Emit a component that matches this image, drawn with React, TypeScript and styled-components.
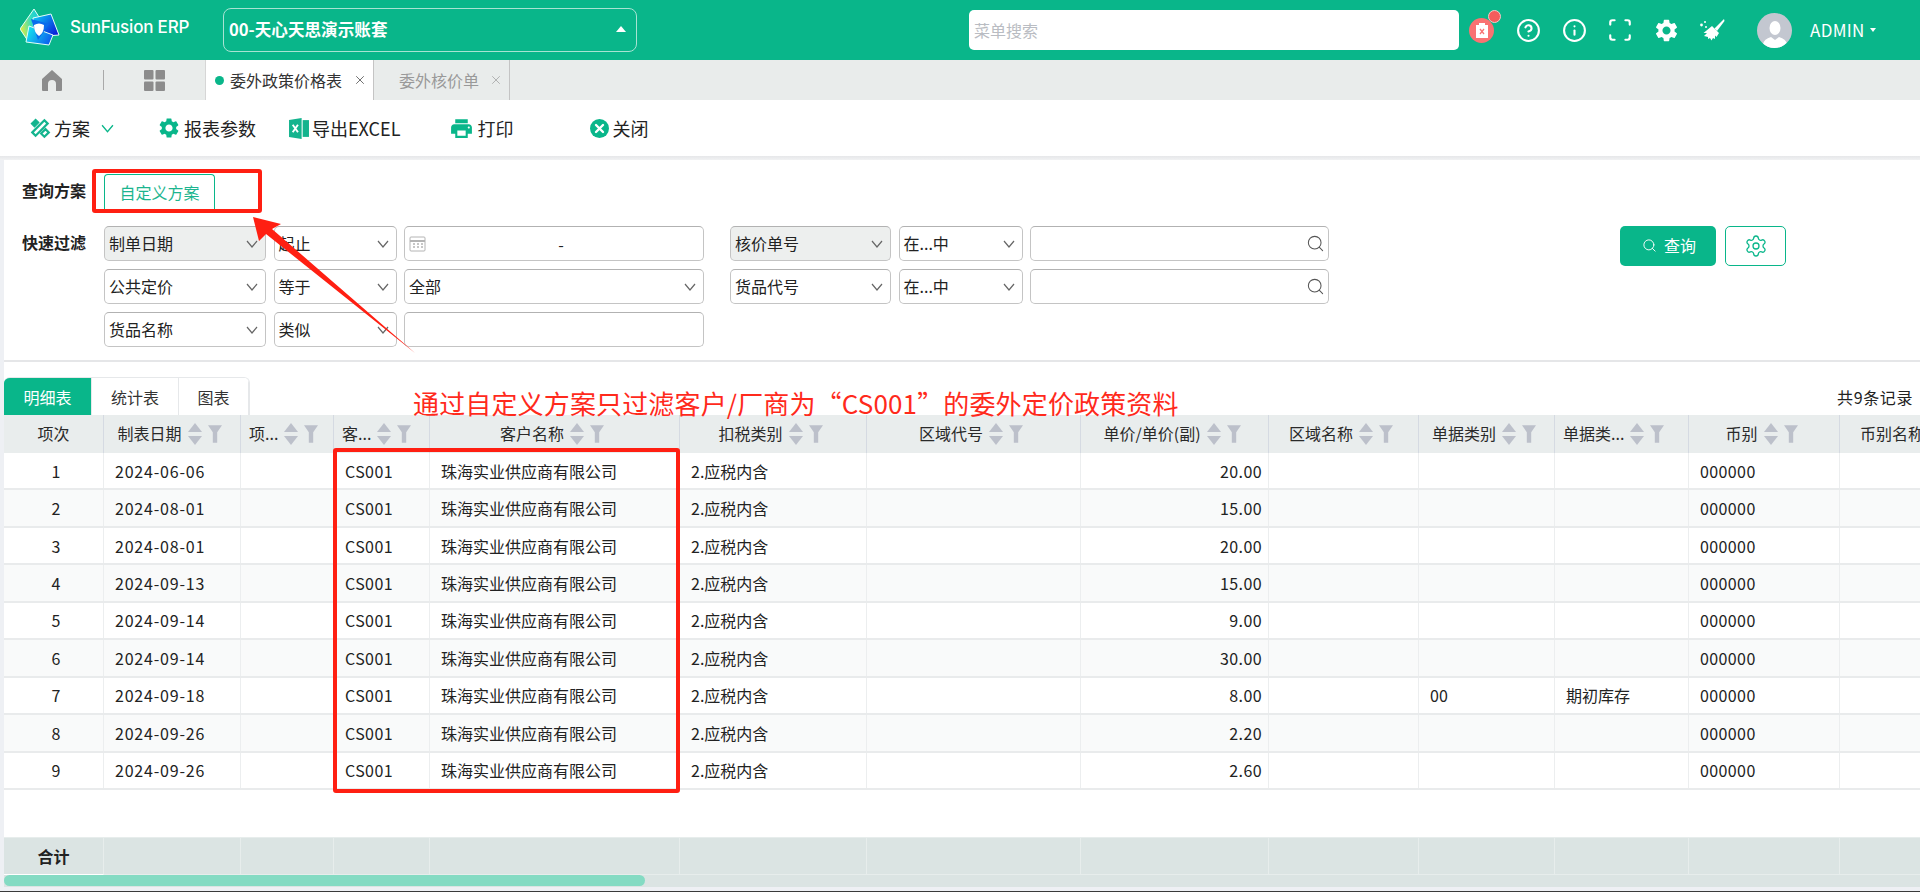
import React from 'react'
import styled, { createGlobalStyle } from 'styled-components'
import { CircleHelp, Info, Scan, Search, Settings, X } from 'lucide-react'
import { MdSettings, MdPrint } from 'react-icons/md'

const GREEN = '#09b68a'
const CJK = `"Noto Sans CJK SC", "Noto Sans", sans-serif`

const GlobalStyle = createGlobalStyle`
html, body {
  margin: 0;
  padding: 0;
  overflow: hidden;
  background: #eef0f4;
  font-family: ${CJK};
  font-size: 16px;
  color: #1f1f1f;
}
* { box-sizing: border-box; }
`

const Page = styled.div`
position: relative;
width: 1920px;
height: 892px;
display: flex;
flex-direction: column;
overflow: hidden;
background: #eef0f4;
border-bottom: 1px solid #3a3a3a;
`

/* top bar */
const TopBar = styled.header`
height: 60px;
flex: none;
display: flex;
align-items: center;
background: ${GREEN};
color: #fff;
padding-left: 20px;
`
const Brand = styled.div`
width: 203px;
display: flex;
align-items: center;
gap: 10px;
font-family: Inter, sans-serif;
font-size: 17px;
font-weight: 500;
letter-spacing: -0.2px;
padding-bottom: 6px;
`
const AccountSelect = styled.div`
width: 414px;
height: 44px;
display: flex;
align-items: center;
justify-content: space-between;
border: 1px solid #a8e3d3;
border-radius: 8px;
padding: 0 10px 2px 5px;
font-weight: 700;
font-size: 16.6px;
`
const CaretUp = styled.span`
width: 0;
height: 0;
border-left: 5px solid transparent;
border-right: 5px solid transparent;
border-bottom: 6px solid #fff;
`
const SearchBox = styled.div`
width: 490px;
height: 40px;
margin-left: 332px;
background: #fff;
border-radius: 5px;
color: #b9bcc2;
font-size: 16px;
line-height: 40px;
padding-left: 5px;
`
const AlertBadge = styled.span`
position: relative;
width: 25px;
height: 25px;
margin-left: 10px;
border-radius: 50%;
background: #f97272;
display: flex;
align-items: center;
justify-content: center;
`
const AlertDot = styled.span`
position: absolute;
top: -8px;
right: -7px;
width: 13px;
height: 13px;
border-radius: 50%;
background: #f45c5c;
border: 1px solid #f5c9c9;
`
const TopIcon = styled.span`
width: 46px;
height: 30px;
display: flex;
align-items: center;
justify-content: center;
color: #fff;
`
const TopIcons = styled.div`
display: flex;
align-items: center;
margin-left: 11px;
`
const Avatar = styled.span`
width: 35px;
height: 35px;
margin-left: 22px;
border-radius: 50%;
background: #c3c7d0;
display: flex;
align-items: flex-end;
justify-content: center;
overflow: hidden;
`
const UserName = styled.span`
margin: 0 0 2px 18px;
font-size: 17px;
letter-spacing: 0.3px;
`
const CaretDown = styled.span`
width: 0;
height: 0;
margin-left: 5px;
border-left: 3px solid transparent;
border-right: 3px solid transparent;
border-top: 4px solid #fff;
`

/* open page tabs */
const TabBar = styled.nav`
height: 40px;
flex: none;
display: flex;
background: #e9eceb;
`
const NavIcon = styled.span<{ $w: number; $divider?: boolean }>`
width: ${(p) => p.$w}px;
height: 20px;
align-self: center;
display: flex;
align-items: center;
justify-content: center;
border-right: ${(p) => (p.$divider ? '1px solid #a9a9a9' : 'none')};
`
const PageTab = styled.div<{ $active?: boolean; $w: number }>`
width: ${(p) => p.$w}px;
display: flex;
align-items: center;
padding-left: ${(p) => (p.$active ? 9 : 25)}px;
background: ${(p) => (p.$active ? '#fff' : 'transparent')};
color: ${(p) => (p.$active ? '#333' : '#999')};
border-left: ${(p) => (p.$active ? '1px solid #d6d6d6' : 'none')};
border-right: 1px solid #c4c4c4;
font-size: 16px;
`
const TabDot = styled.span`
width: 9px;
height: 9px;
border-radius: 50%;
background: ${GREEN};
margin-right: 6px;
`
const TabClose = styled.span`
display: flex;
margin-left: auto;
margin-right: 6px;
color: inherit;
`

/* action toolbar */
const ToolBar = styled.div`
height: 56px;
flex: none;
display: flex;
align-items: center;
background: #fff;
font-size: 18px;
color: #222;
`
const ToolItem = styled.span<{ $left: number }>`
display: flex;
align-items: center;
gap: 3px;
margin-left: ${(p) => p.$left}px;
white-space: nowrap;
`
const MenuChevron = styled.span`
display: flex;
margin-left: 8px;
`
const Band = styled.div`
height: 4px;
flex: none;
background: linear-gradient(#e6e7e9, #f1f2f3);
`

/* query panel */
const Body = styled.main`
flex: 1;
min-height: 0;
margin-left: 4px;
background: #fff;
display: flex;
flex-direction: column;
`
const QueryPanel = styled.section`
height: 200px;
flex: none;
padding: 14px 0 0 18px;
`
const SchemeRow = styled.div`
display: flex;
height: 35px;
align-items: center;
`
const RowLabel = styled.span`
width: 82px;
height: 35px;
line-height: 33px;
font-weight: 700;
font-size: 16px;
color: #222;
flex: none;
`
const SchemeTab = styled.span`
width: 111px;
height: 35px;
display: flex;
align-items: center;
justify-content: center;
color: #1cb58f;
font-size: 16px;
border: 1px solid ${GREEN};
border-bottom: none;
border-radius: 4px 4px 0 0;
`
const FilterRow = styled.div`
display: flex;
margin-top: 17px;
`
const FilterGrid = styled.div`
display: grid;
grid-template-columns: 162px 123px 300px 11px 161px 124px 299px;
grid-auto-rows: 35px;
gap: 8px 7.5px;
`
const Field = styled.div<{ $shaded?: boolean; $right?: boolean }>`
display: flex;
align-items: center;
justify-content: space-between;
height: 35px;
padding: 0 7px 0 4px;
background: ${(p) => (p.$shaded ? '#edefee' : '#fff')};
border: 1px solid #c4c4c4;
border-top-color: #b2b2b2;
border-radius: 5px;
font-size: 16px;
color: #222;
white-space: nowrap;
`
const FieldText = styled.span`
margin-top: -2px;
`
const DateText = styled.span`
flex: 1;
text-align: center;
`
const SearchInput = styled(Field)`
padding-right: 3px;
`
const Spacer = styled.span``
const QueryActions = styled.div`
display: flex;
gap: 9px;
margin-left: 291px;
align-items: flex-start;
`
const QueryButton = styled.button`
width: 96px;
height: 40px;
border: none;
border-radius: 5px;
padding: 0 0 2px 2px;
background: ${GREEN};
color: #fff;
font: inherit;
font-size: 16px;
display: flex;
align-items: center;
justify-content: center;
gap: 7px;
`
const GearButton = styled.button`
width: 61px;
height: 40px;
background: #fff;
border: 1px solid ${GREEN};
border-radius: 5px;
color: ${GREEN};
display: flex;
align-items: center;
justify-content: center;
`
const Rule = styled.div`
height: 2px;
flex: none;
background: #e5e6e8;
`

/* list */
const ListBar = styled.div`
height: 53px;
flex: none;
padding-top: 15px;
display: flex;
align-items: flex-end;
justify-content: space-between;
`
const ViewTabs = styled.div`
display: flex;
height: 38px;
border: 1px solid #e6e8ea;
border-left: none;
border-bottom: none;
border-radius: 6px 6px 0 0;
overflow: hidden;
`
const ViewTab = styled.span<{ $active?: boolean; $w: number }>`
width: ${(p) => p.$w}px;
display: flex;
align-items: center;
justify-content: center;
font-size: 16px;
background: ${(p) => (p.$active ? GREEN : '#fff')};
color: ${(p) => (p.$active ? '#fff' : '#333')};
border-right: 1px solid #e6e8ea;
`
const RecordCount = styled.span`
font-size: 16px;
letter-spacing: 0.6px;
color: #222;
padding: 0 7px 6px 0;
`
const COLUMNS = '100px 137px 93px 96px 250px 187px 214px 188px 150px 136px 134px 151px 150px'
const TableWrap = styled.div`
flex: 1;
min-height: 0;
overflow: hidden;
display: flex;
flex-direction: column;
`
const HeadRow = styled.div`
display: grid;
grid-template-columns: ${COLUMNS};
height: 38px;
flex: none;
background: #e9eded;
`
const HeadCell = styled.div<{ $left?: boolean; $plain?: boolean }>`
display: flex;
align-items: center;
justify-content: ${(p) => (p.$left ? 'flex-start' : 'center')};
padding-left: ${(p) => (p.$left ? 8 : 0)}px;
padding-right: ${(p) => (p.$left || p.$plain ? 0 : 5)}px;
gap: 6px;
border-right: 1px solid #d5dae2;
font-size: 16px;
color: #2a2a2a;
white-space: nowrap;
overflow: hidden;
`
const HeadLabel = styled.span`
margin-top: -2px;
`
const Row = styled.div<{ $even: boolean }>`
display: grid;
grid-template-columns: ${COLUMNS};
height: 37.44px;
flex: none;
background: ${(p) => (p.$even ? '#f9fafa' : '#fff')};
border-bottom: 2px solid #e9ebec;
`
const Cell = styled.div<{ $align?: string; $track?: number }>`
display: flex;
align-items: center;
padding: 0 6px 0 11px;
justify-content: ${(p) => p.$align || 'flex-start'};
letter-spacing: ${(p) => p.$track || 0}px;
border-right: 1px solid #eceeef;
font-size: 16px;
color: #222;
white-space: nowrap;
overflow: hidden;
`
const Blank = styled.div`
flex: 1;
background: #fff;
`
const SumRow = styled.div`
display: grid;
grid-template-columns: ${COLUMNS};
height: 38px;
flex: none;
background: #dbe4e3;
`
const SumCell = styled.div<{ $first?: boolean }>`
display: flex;
align-items: center;
justify-content: center;
font-weight: 700;
font-size: 16px;
color: #222;
border-right: 1px solid #e7edec;
border-top: 1px solid #e7edec;
border-bottom: ${(p) => (p.$first ? '1px solid #fff' : '1px solid #e7edec')};
`
const Track = styled.div`
height: 12px;
flex: none;
background: #dbe4e3;
`
const Thumb = styled.div`
width: 641px;
height: 11px;
border-radius: 6px;
background: #84dbc3;
`
const BottomGap = styled.div`
height: 4px;
flex: none;
background: #eef0f4;
`

/* the red notes drawn over the screenshot */
const NoteBox = styled.div<{ $x: number; $y: number; $w: number; $h: number }>`
position: absolute;
left: ${(p) => p.$x}px;
top: ${(p) => p.$y}px;
width: ${(p) => p.$w}px;
height: ${(p) => p.$h}px;
border: 4px solid #ff1f12;
border-radius: 3px;
pointer-events: none;
`
const NoteText = styled.div`
position: absolute;
left: 413px;
top: 384px;
font-size: 26px;
letter-spacing: 0.15px;
line-height: 38px;
color: #ff2a1c;
white-space: nowrap;
`
const NoteArrow = styled.svg`
position: absolute;
left: 240px;
top: 205px;
`

const Logo = () => (
  <svg width="40" height="38" viewBox="0 0 40 38">
    <defs>
      <linearGradient id="lgA" x1="0" y1="0.6" x2="1" y2="0.4">
        <stop offset="0" stopColor="#e8ec3a" />
        <stop offset="0.45" stopColor="#30dcc0" />
        <stop offset="1" stopColor="#08b8f4" />
      </linearGradient>
      <linearGradient id="lgB" x1="0" y1="0" x2="1" y2="0.8">
        <stop offset="0" stopColor="#0ad4fa" />
        <stop offset="1" stopColor="#0a18d8" />
      </linearGradient>
      <linearGradient id="lgC" x1="0" y1="0.3" x2="1" y2="0.7">
        <stop offset="0" stopColor="#14e6ee" />
        <stop offset="1" stopColor="#0c58ee" />
      </linearGradient>
    </defs>
    <path d="M14 1 L27 22 L8 33 L0 21 Z" fill="url(#lgA)" stroke="#e4fff8" strokeWidth="1" strokeLinejoin="round" />
    <path d="M31 6 L39 27 L14 29 L13 10 Z" fill="url(#lgB)" stroke="#e4fff8" strokeWidth="1" strokeLinejoin="round" />
    <path d="M9 18 L33 27 L29 37 L6 34 Z" fill="url(#lgC)" stroke="#e4fff8" strokeWidth="1" strokeLinejoin="round" />
    <path d="M11 11 L29 16 L18 32 Z" fill="#0a6cec" />
    <path d="M14 17 Q19 14 24 17 Q24 25 19 28 Q14 25 14 17 Z" fill="#fff" />
  </svg>
)

const TaskIcon = () => (
  <svg width="14" height="17" viewBox="0 0 14 17">
    <path d="M1 3 H4 V1 H10 V3 H13 V16 H1 Z" fill="#fff" />
    <path d="M5 7 L9 12 M9 7 L5 12" stroke="#f97272" strokeWidth="1.3" />
  </svg>
)

const BroomIcon = () => (
  <svg width="26" height="24" viewBox="0 0 26 24" fill="#fff">
    <path d="M25 1 L15.5 10.5 L18 13 L25.5 3 Z" />
    <path d="M13 8 L20 15 L17.5 19 L16 17.5 L16 21 L14 20 L12.5 22.5 L11 20 L9 21 L9 19 L5 18 L8 15 L4.5 15 Z" />
    <circle cx="2.5" cy="7" r="1.4" />
    <circle cx="6" cy="4" r="1" />
    <circle cx="7" cy="9" r="1" />
  </svg>
)

const AvatarFigure = () => (
  <svg width="24" height="28" viewBox="0 0 24 28" fill="#fff">
    <ellipse cx="12" cy="8" rx="5.5" ry="7" />
    <path d="M0 28 V24 Q1 19 8 17 L12 20 L16 17 Q23 19 24 24 V28 Z" />
  </svg>
)

const HomeIcon = () => (
  <svg width="20" height="21" viewBox="0 0 20 21" fill="#8c8c8c">
    <path d="M10 0 L20 9 V20 Q20 21 19 21 H14 V14 Q14 10 10 10 Q6 10 6 14 V21 H1 Q0 21 0 20 V9 Z" />
  </svg>
)

const GridIcon = () => (
  <svg width="21" height="21" viewBox="0 0 21 21" fill="#8c8c8c">
    <rect width="9.5" height="9.5" rx="1" />
    <rect x="11.5" width="9.5" height="9.5" rx="1" />
    <rect y="11.5" width="9.5" height="9.5" rx="1" />
    <rect x="11.5" y="11.5" width="9.5" height="9.5" rx="1" />
  </svg>
)

const PlanIcon = () => (
  <svg width="22" height="22" viewBox="0 0 20 20" fill="none" stroke="#14b48e" strokeWidth="2">
    <path d="M3 14 L14 3 L17 6 L6 17 Z" />
    <path d="M2 6 L6 2 L9 5 L5 9 Z" fill="#14b48e" strokeWidth="1" />
    <path d="M11 15 L15 11 L18 14 L14 18 Z" />
  </svg>
)

const ExcelIcon = () => (
  <svg width="20" height="21" viewBox="0 0 19 20">
    <path d="M0 2 L12 0 V20 L0 18 Z" fill="#14b48e" />
    <rect x="13" y="2" width="6" height="16" fill="#14b48e" />
    <path d="M3.5 6.5 L8.5 13.5 M8.5 6.5 L3.5 13.5" stroke="#fff" strokeWidth="1.8" />
  </svg>
)

const CloseIcon = () => (
  <svg width="19" height="19" viewBox="0 0 19 19">
    <circle cx="9.5" cy="9.5" r="9.5" fill={GREEN} />
    <path d="M6 6 L13 13 M13 6 L6 13" stroke="#fff" strokeWidth="2.4" strokeLinecap="round" />
  </svg>
)

const Chevron = ({ color = '#666', size = 12 }: { color?: string; size?: number }) => (
  <svg width={size} height={size - 4} viewBox="0 0 12 8" fill="none" stroke={color} strokeWidth="1.2">
    <path d="M1 1 L6 7 L11 1" />
  </svg>
)

const CalendarIcon = () => (
  <svg width="17" height="17" viewBox="0 0 17 17" fill="none" stroke="#b4b4b4">
    <rect x="1" y="2" width="15" height="14" rx="1" />
    <path d="M1 6 H16" strokeWidth="2" />
    <path d="M4 9 H6 M8 9 H10 M12 9 H14 M4 12 H6 M8 12 H10 M12 12 H14" strokeWidth="1.4" />
  </svg>
)

const SortIcon = () => (
  <svg width="14" height="22" viewBox="0 0 14 22" fill="#bcc0ca">
    <path d="M7 0 L14 9 H0 Z" />
    <path d="M0 13 H14 L7 22 Z" />
  </svg>
)

const FunnelIcon = () => (
  <svg width="14" height="20" viewBox="0 0 16 20" fill="#bcc0ca">
    <path d="M0 0 H16 L10.5 8 V20 H5.5 V8 Z" />
  </svg>
)

const Select = ({ label, shaded }: { label: string; shaded?: boolean }) => (
  <Field $shaded={shaded}>
    <FieldText>{label}</FieldText>
    <Chevron />
  </Field>
)

const SearchField = () => (
  <SearchInput>
    <Spacer />
    <Search size={19} color="#555" strokeWidth={1.3} />
  </SearchInput>
)

const headers = [
  { label: '项次', plain: true },
  { label: '制表日期' },
  { label: '项...', left: true },
  { label: '客...', left: true },
  { label: '客户名称' },
  { label: '扣税类别' },
  { label: '区域代号' },
  { label: '单价/单价(副)' },
  { label: '区域名称' },
  { label: '单据类别' },
  { label: '单据类...', left: true },
  { label: '币别' },
  { label: '币别名称' },
]

const records = [
  { date: '2024-06-06', price: '20.00' },
  { date: '2024-08-01', price: '15.00' },
  { date: '2024-08-01', price: '20.00' },
  { date: '2024-09-13', price: '15.00' },
  { date: '2024-09-14', price: '9.00' },
  { date: '2024-09-14', price: '30.00' },
  { date: '2024-09-18', price: '8.00', docType: '00', docName: '期初库存' },
  { date: '2024-09-26', price: '2.20' },
  { date: '2024-09-26', price: '2.60' },
]

export default function App() {
  return (
    <Page>
      <GlobalStyle />
      <TopBar>
        <Brand>
          <Logo />
          SunFusion ERP
        </Brand>
        <AccountSelect>
          00-天心天思演示账套
          <CaretUp />
        </AccountSelect>
        <SearchBox>菜单搜索</SearchBox>
        <AlertBadge>
          <TaskIcon />
          <AlertDot />
        </AlertBadge>
        <TopIcons>
          <TopIcon><CircleHelp size={25} strokeWidth={2} /></TopIcon>
          <TopIcon><Info size={25} strokeWidth={2} /></TopIcon>
          <TopIcon><Scan size={26} strokeWidth={2} /></TopIcon>
          <TopIcon><MdSettings size={27} /></TopIcon>
          <TopIcon><BroomIcon /></TopIcon>
        </TopIcons>
        <Avatar><AvatarFigure /></Avatar>
        <UserName>ADMIN</UserName>
        <CaretDown />
      </TopBar>

      <TabBar>
        <NavIcon $w={104} $divider><HomeIcon /></NavIcon>
        <NavIcon $w={101}><GridIcon /></NavIcon>
        <PageTab $active $w={169}>
          <TabDot />
          委外政策价格表
          <TabClose><X size={14} strokeWidth={1.2} /></TabClose>
        </PageTab>
        <PageTab $w={136}>
          委外核价单
          <TabClose><X size={14} strokeWidth={1.2} /></TabClose>
        </PageTab>
      </TabBar>

      <ToolBar>
        <ToolItem $left={29}>
          <PlanIcon />
          方案
          <MenuChevron><Chevron color={GREEN} size={13} /></MenuChevron>
        </ToolItem>
        <ToolItem $left={43}><MdSettings size={24} color={GREEN} />报表参数</ToolItem>
        <ToolItem $left={33}><ExcelIcon />导出EXCEL</ToolItem>
        <ToolItem $left={49}><MdPrint size={25} color={GREEN} />打印</ToolItem>
        <ToolItem $left={77}><CloseIcon />关闭</ToolItem>
      </ToolBar>
      <Band />

      <Body>
        <QueryPanel>
          <SchemeRow>
            <RowLabel>查询方案</RowLabel>
            <SchemeTab>自定义方案</SchemeTab>
          </SchemeRow>
          <FilterRow>
            <RowLabel>快速过滤</RowLabel>
            <FilterGrid>
              <Select label="制单日期" shaded />
              <Select label="起止" />
              <Field>
                <CalendarIcon />
                <DateText>-</DateText>
              </Field>
              <Spacer />
              <Select label="核价单号" shaded />
              <Select label="在...中" />
              <SearchField />

              <Select label="公共定价" />
              <Select label="等于" />
              <Select label="全部" />
              <Spacer />
              <Select label="货品代号" />
              <Select label="在...中" />
              <SearchField />

              <Select label="货品名称" />
              <Select label="类似" />
              <Field />
            </FilterGrid>
            <QueryActions>
              <QueryButton><Search size={15} strokeWidth={1.5} />查询</QueryButton>
              <GearButton><Settings size={24} strokeWidth={1.3} /></GearButton>
            </QueryActions>
          </FilterRow>
        </QueryPanel>
        <Rule />

        <ListBar>
          <ViewTabs>
            <ViewTab $active $w={88}>明细表</ViewTab>
            <ViewTab $w={87}>统计表</ViewTab>
            <ViewTab $w={70}>图表</ViewTab>
          </ViewTabs>
          <RecordCount>共9条记录</RecordCount>
        </ListBar>

        <TableWrap>
          <HeadRow>
            {headers.map((h) => (
              <HeadCell key={h.label} $left={h.left} $plain={h.plain}>
                <HeadLabel>{h.label}</HeadLabel>
                {!h.plain && <SortIcon />}
                {!h.plain && <FunnelIcon />}
              </HeadCell>
            ))}
          </HeadRow>
          {records.map((r, i) => (
            <Row key={i} $even={i % 2 === 1}>
              <Cell $align="center">{i + 1}</Cell>
              <Cell $track={0.8}>{r.date}</Cell>
              <Cell />
              <Cell $track={0.4}>CS001</Cell>
              <Cell>珠海实业供应商有限公司</Cell>
              <Cell>2.应税内含</Cell>
              <Cell />
              <Cell $align="flex-end" $track={0.4}>{r.price}</Cell>
              <Cell />
              <Cell>{r.docType}</Cell>
              <Cell>{r.docName}</Cell>
              <Cell $track={0.4}>000000</Cell>
              <Cell />
            </Row>
          ))}
          <Blank />
          <SumRow>
            {headers.map((h, i) => (
              <SumCell key={h.label} $first={i === 0}>{i === 0 ? '合计' : ''}</SumCell>
            ))}
          </SumRow>
          <Track><Thumb /></Track>
          <BottomGap />
        </TableWrap>
      </Body>

      <NoteBox $x={92} $y={169} $w={170} $h={44} />
      <NoteBox $x={333} $y={448} $w={347} $h={345} />
      <NoteText>通过自定义方案只过滤客户/厂商为“CS001”的委外定价政策资料</NoteText>
      <NoteArrow width="190" height="160" viewBox="240 205 190 160">
        <path d="M253 217 L281 224 L272 229 L415 353 L266 234 L259 241 Z" fill="#ff1f12" />
      </NoteArrow>
    </Page>
  )
}
